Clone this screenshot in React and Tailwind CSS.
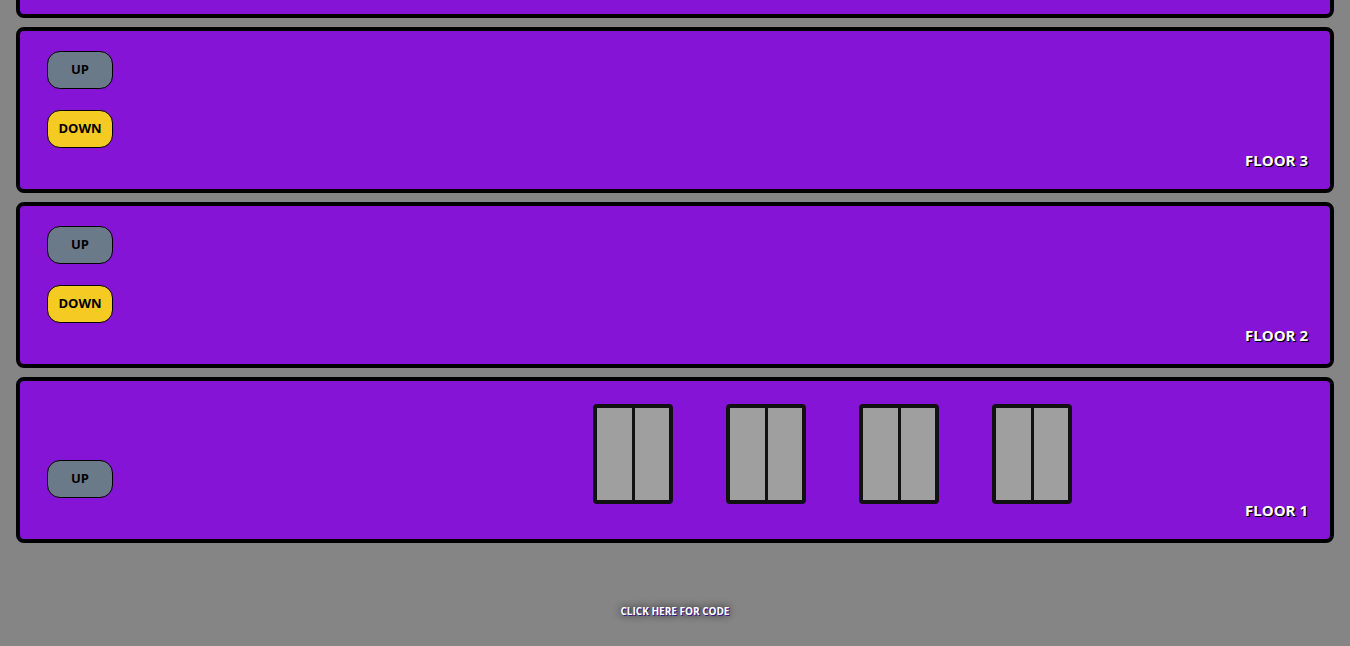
import React from "react";

const font = { fontFamily: '"Open Sans", "Noto Sans", sans-serif' };

function Btn({ label, yellow }) {
  return (
    <button
      className={
        "w-[66px] h-[38px] rounded-[13px] border border-black text-[13px] font-bold text-black flex items-center justify-center " +
        (yellow ? "bg-[#f5ca22]" : "bg-[#6b7a89]")
      }
      style={font}
    >
      {label}
    </button>
  );
}

function Elevator() {
  return (
    <div className="w-[80px] h-[100px] border-[4px] border-[#111] rounded-[4px] bg-[#a09fa0] flex">
      <div className="flex-1 border-r-[3px] border-[#111]" />
      <div className="flex-1" />
    </div>
  );
}

function Floor({ n, up, down, elevators }) {
  return (
    <div className="relative h-[166px] shrink-0 mx-[16px] border-[4px] border-black rounded-[8px] bg-[#8614d6] flex">
      <div className="w-[93px] pl-[27px] pb-[41px] flex flex-col justify-end gap-[21px]">
        {up && <Btn label="UP" />}
        {down && <Btn label="DOWN" yellow />}
      </div>
      {elevators && (
        <div className="ml-[480px] mt-[23px] flex gap-[53px] items-start">
          <Elevator />
          <Elevator />
          <Elevator />
          <Elevator />
        </div>
      )}
      {n && (
        <div
          className="absolute right-[22px] bottom-[21px] text-white font-bold text-[15px] leading-none"
          style={{ ...font, textShadow: "1px 1px 1px #000, 1px 1px 0 #000" }}
        >
          FLOOR {n}
        </div>
      )}
    </div>
  );
}

export default function App() {
  return (
    <div className="w-full h-[646px] overflow-hidden bg-[#858585] flex flex-col justify-end">
      <div className="flex flex-col gap-[9px]">
        <Floor />
        <Floor n={3} up down />
        <Floor n={2} up down />
        <Floor n={1} up elevators />
      </div>
      <div className="h-[103px] flex justify-center pt-[63px] shrink-0">
        <span
          className="text-white font-bold text-[10px] leading-none h-fit"
          style={{
            ...font,
            textShadow: "1px 1px 0 #3a1a8a, 0 0 6px rgba(0,0,0,0.6), 0 0 10px rgba(0,0,0,0.4)",
          }}
        >
          CLICK HERE FOR CODE
        </span>
      </div>
    </div>
  );
}
